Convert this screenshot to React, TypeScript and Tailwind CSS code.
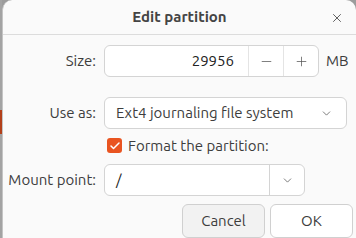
import { Check, ChevronDown, Minus, Plus, X } from "lucide-react";

const font = { fontFamily: "Ubuntu, 'Noto Sans', 'Open Sans', sans-serif" };

export default function App() {
  return (
    <div className="flex h-[238px] w-[356px] overflow-hidden bg-[#9c9c9c]" style={font}>
      {/* window behind the dialog */}
      <div className="flex w-[2px] shrink-0 flex-col">
        <div className="h-[110px] bg-[#a3a3a3]" />
        <div className="h-[24px] bg-[#b3401a]" />
        <div className="flex-1 bg-[#a3a3a3]" />
      </div>

      <div className="flex flex-1 flex-col rounded-t-[10px] border-l border-[#c4c4c4] bg-[#fafafa] text-[15px] leading-[20px] text-[#3d3d3d]">
        <div className="relative flex h-[35px] shrink-0 items-center justify-center border-b border-[#dcdcdc]">
          <span className="text-[15px] font-bold text-[#444]">Edit partition</span>
          <X size={14} strokeWidth={1.6} className="absolute right-[12px] top-[11px] text-[#555]" />
        </div>

        {/* Size */}
        <div className="mt-[10px] flex items-center">
          <span className="w-[101px] pr-[8px] text-right">Size:</span>
          <div className="flex h-[32px] w-[215px] overflow-hidden rounded-[6px] border border-[#d4d4d4] bg-white">
            <div className="flex flex-1 items-center justify-end pr-[14px] text-[#222]">29956</div>
            <div className="flex w-[35px] items-center justify-center border-l border-[#e4e4e4]">
              <Minus size={15} strokeWidth={1.2} className="text-[#555]" />
            </div>
            <div className="flex w-[35px] items-center justify-center border-l border-[#e4e4e4]">
              <Plus size={15} strokeWidth={1.2} className="text-[#555]" />
            </div>
          </div>
          <span className="ml-[7px]">MB</span>
        </div>

        {/* Use as */}
        <div className="mt-[20px] flex items-center">
          <span className="w-[101px] pr-[8px] text-right">Use as:</span>
          <div className="flex h-[32px] w-[243px] items-center justify-between rounded-[6px] border border-[#d4d4d4] bg-white pl-[11px] pr-[13px]">
            <span>Ext4 journaling file system</span>
            <ChevronDown size={13} strokeWidth={1.4} className="text-[#555]" />
          </div>
        </div>

        {/* Format checkbox */}
        <div className="mt-[5px] flex h-[24px] items-center pl-[104px]">
          <div className="flex h-[15px] w-[15px] items-center justify-center rounded-[3px] bg-[#e95420]">
            <Check size={12} strokeWidth={3} className="text-white" />
          </div>
          <span className="ml-[6px]">Format the partition:</span>
        </div>

        {/* Mount point */}
        <div className="mt-[7px] flex items-center">
          <span className="w-[101px] pr-[8px] text-right">Mount point:</span>
          <div className="flex h-[32px] w-[201px] overflow-hidden rounded-[6px] border border-[#d4d4d4] bg-white">
            <div className="flex flex-1 items-center pl-[11px] text-[#222]">/</div>
            <div className="flex w-[35px] items-center justify-center border-l border-[#d4d4d4]">
              <ChevronDown size={13} strokeWidth={1.4} className="text-[#555]" />
            </div>
          </div>
        </div>

        {/* Buttons */}
        <div className="mt-[8px] flex justify-end gap-[5px] pr-[3px]">
          <button className="h-[34px] w-[83px] rounded-[6px] border border-[#d0d0d0] bg-[#f2f2f2] text-[#3d3d3d]">
            Cancel
          </button>
          <button className="h-[34px] w-[83px] rounded-[6px] border border-[#d0d0d0] bg-white text-[#3d3d3d]">
            OK
          </button>
        </div>
      </div>
    </div>
  );
}
